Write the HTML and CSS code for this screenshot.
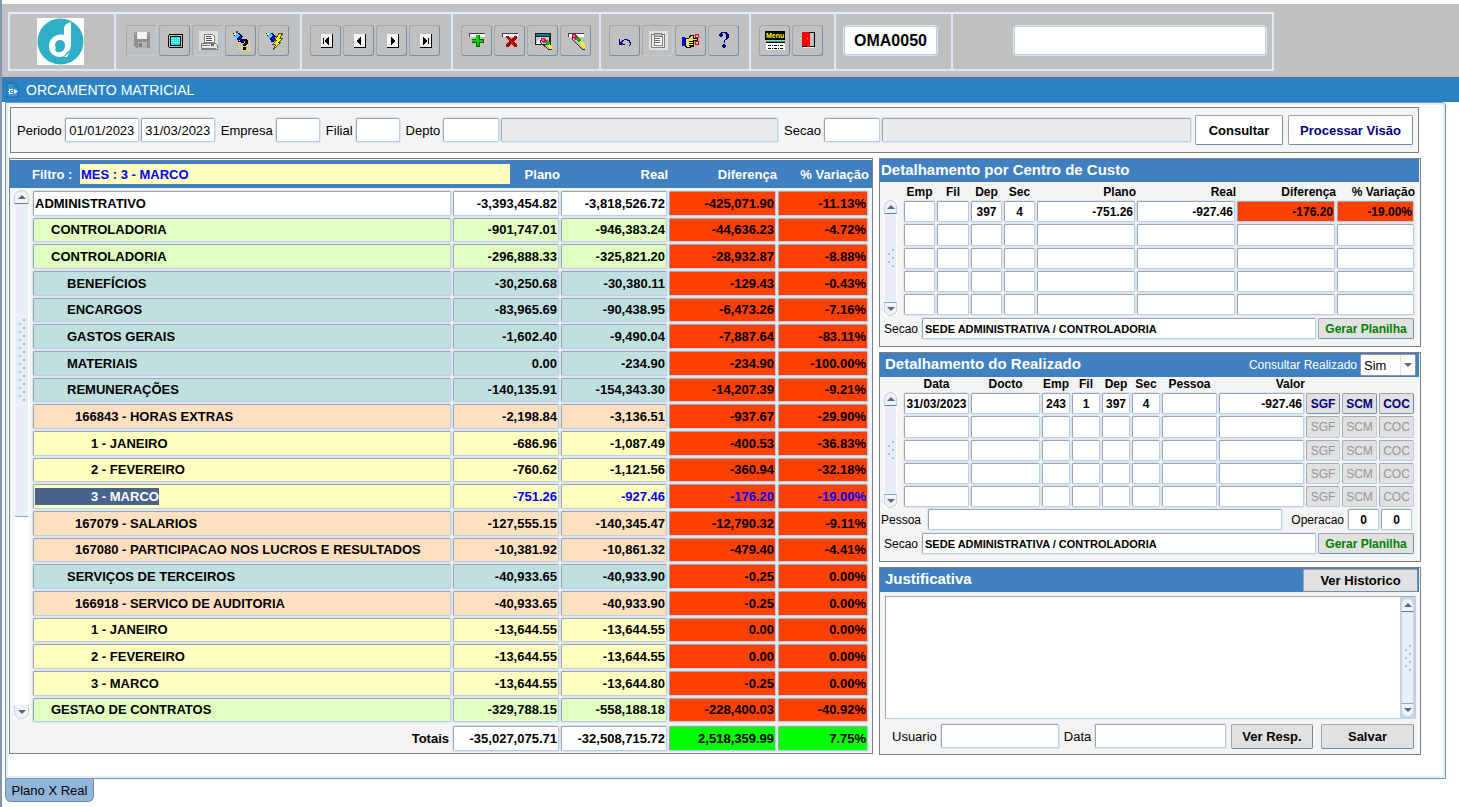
FILE: index.html
```html
<!DOCTYPE html>
<html lang="pt-BR">
<head>
  <meta charset="UTF-8" />
  <meta name="viewport" content="width=device-width, initial-scale=1.0" />
  <title>Orcamento Matricial</title>
  <link rel="stylesheet" href="styles.css">
</head>
<body>
  <div class="shell">
    <div class="toolbar">
      <div class="tool-group logo-group">
        <svg class="logo" viewBox="0 0 47 47">
          <rect width="47" height="47" fill="#fff"/>
          <circle cx="23.5" cy="23.5" r="23" fill="#2fafc6"/>
          <path d="M34 4 C30 5 27 7 27 11 V17 C19 15 12 21 12 28 C12 35 17 39 23 39 C26 39 29 37 30 34 C33 33 34 30 34 26 Z" fill="#fff"/>
          <circle cx="23" cy="27" r="5" fill="#2fafc6"/>
          <path d="M19 30 C17 32 19 35 23 34 C26 34 28 31 28 27 L24 30 Z" fill="#2fafc6"/>
          <path d="M27 39 L33 34 L30 39 Z" fill="#fff"/>
        </svg>
      </div>
      <div class="tool-group">
        <button class="tool" disabled aria-label="Salvar registro">
          <svg viewBox="0 0 20 20"><path d="M2 1h16v16H4l-2-2z" fill="#909090"/><path d="M5 1h10v7H5z" fill="#f4f4f4"/><path d="M6 11h9v6H6z" fill="#b4b4b4"/><path d="M7 12h3v4H7z" fill="#808080"/><path d="M3 2h1v1H3zM16 2h1v1h-1z" fill="#e0e0e0"/></svg>
        </button>
        <button class="tool" aria-label="Tela">
          <svg viewBox="0 0 20 20"><path d="M4 3h13l1 1v12l-1 1H4l-1-1V4z" fill="#000"/><path d="M4 4h13v12H4z" fill="#c0c0c0"/><path d="M5 5h11v10H5z" fill="#000"/><path d="M6 6h9v8H6z" fill="#00e8f0"/><path d="M6 7.5h9M6 9.5h9M6 11.5h9" stroke="#c8ffff" stroke-dasharray="1 1"/></svg>
        </button>
        <button class="tool" disabled aria-label="Imprimir">
          <svg viewBox="0 0 20 20"><path d="M1 0h19v19H1z" fill="#e0e0e0"/><path d="M6 3h8l2 2v6H6z" fill="#fff" stroke="#808080"/><path d="M8 5.5h5M8 7.5h6M8 9.5h6" stroke="#505050"/><path d="M4 12h13l2 2v4H3v-5z" fill="#e8e8e8" stroke="#808080"/><path d="M4 14.5h8M4 17.5h14" stroke="#808080"/><path d="M13 13h3v2h-3z" fill="#606060"/></svg>
        </button>
        <button class="tool" aria-label="Entrar consulta">
          <svg viewBox="0 0 20 20"><path d="M2 2l3 1 3-1 4 3-2 6H8L5 8z" fill="#0000c0"/><path d="M2 2h2l1 3 2 3-2-1z" fill="#000"/><path d="M3 2h3l3 3-4 3z" fill="#50c8f0"/><path d="M3 2h2v2H3z" fill="#fff"/><path d="M5 0h2v2H5z" fill="#e00000"/><path d="M8 2l4 3-2 1M7 10h3v1H7z" fill="#000"/><path d="M8 9.5h12M8 11.5h12M8 13.5h12M8 15.5h12M8 17.5h12M9 19.5h11" stroke="#ffff00" stroke-dasharray="1 1"/><path d="M11 8h5v1h1v4h-1v1h-1v1h-3v-2h1v-1h1V10h-1v2h-3V9h1zM12 16h3v3h-3z" fill="#000"/></svg>
        </button>
        <button class="tool" aria-label="Executar consulta">
          <svg viewBox="0 0 20 20"><path d="M2 2l3 1 3-1 4 3-2 6H8L5 8z" fill="#0000c0"/><path d="M2 2h2l1 3 2 3-2-1z" fill="#000"/><path d="M3 2h3l3 3-4 3z" fill="#50c8f0"/><path d="M3 2h2v2H3z" fill="#fff"/><path d="M8 2l4 3-2 1M7 10h3v1H7z" fill="#000"/><path d="M15 2h4l-3 5h3l-4 4h2l-8 8 3-6H9l4-4h-2z" fill="#ffff00" stroke="#505000"/></svg>
        </button>
      </div>
      <div class="tool-group w-nav">
        <button class="tool" aria-label="Primeiro registro">
          <svg viewBox="0 0 20 20"><path d="M5 3h12v14H5z" fill="#000"/><path d="M5 3h11v13H5z" fill="#f4f4f4"/><path d="M7 7h1v6H7zM13 6v8h-1v-1h-1v-1h-1v-1H9V9h1V8h1V7h1V6z" fill="#000"/></svg>
        </button>
        <button class="tool" aria-label="Registro anterior">
          <svg viewBox="0 0 20 20"><path d="M5 3h12v14H5z" fill="#000"/><path d="M5 3h11v13H5z" fill="#f4f4f4"/><path d="M12 6v8h-1v-1h-1v-1H9v-1H8V9h1V8h1V7h1V6z" fill="#000"/></svg>
        </button>
        <button class="tool" aria-label="Proximo registro">
          <svg viewBox="0 0 20 20"><path d="M5 3h12v14H5z" fill="#000"/><path d="M5 3h11v13H5z" fill="#f4f4f4"/><path d="M9 6v8h1v-1h1v-1h1v-1h1V9h-1V8h-1V7h-1V6z" fill="#000"/></svg>
        </button>
        <button class="tool" aria-label="Ultimo registro">
          <svg viewBox="0 0 20 20"><path d="M5 3h12v14H5z" fill="#000"/><path d="M5 3h11v13H5z" fill="#f4f4f4"/><path d="M8 6v8h1v-1h1v-1h1v-1h1V9h-1V8h-1V7H9V6zM13 7h1v6h-1z" fill="#000"/></svg>
        </button>
      </div>
      <div class="tool-group w-edit">
        <button class="tool" aria-label="Inserir registro">
          <svg viewBox="0 0 20 20"><path d="M2 2h16v4H2z" fill="#404040"/><path d="M3 3h15v3H3z" fill="#fff"/><path d="M9 4h4v4h4v4h-4v4H9v-4H5V8h4z" fill="#006800"/><path d="M9 4h3v5h4v2h-4v4h-2v-4H5V9h4z" fill="#00d000"/></svg>
        </button>
        <button class="tool" aria-label="Excluir registro">
          <svg viewBox="0 0 20 20"><path d="M2 2h16v4H2z" fill="#404040"/><path d="M3 3h15v3H3z" fill="#fff"/><path d="M6 5h3l2 3 3-3h3v2l-3 4 3 3v2h-3l-3-3-2 3H6v-2l3-4-3-3z" fill="#a00000"/><path d="M7 6l8 9" stroke="#d81010"/></svg>
        </button>
        <button class="tool" aria-label="Limpar bloco">
          <svg viewBox="0 0 20 20"><path d="M2 2h16v12H2z" fill="#202020"/><path d="M3 3h14v2H3z" fill="#008080"/><path d="M3 6h13v7H3z" fill="#c8c8c8"/><path d="M3 13l5-7v7z" fill="#fff"/><path d="M8 7h4l2 3-3 2-3-2z" fill="#e00060"/><path d="M9 8h2v2H9z" fill="#ff70c0"/><path d="M12 11l2-2 3 3-2 3-3-3z" fill="#00b000"/><path d="M15 14l2-1 2 3v2h-2z" fill="#ffff00"/><path d="M7 9v2l8 7h4" fill="none" stroke="#303000"/></svg>
        </button>
        <button class="tool" aria-label="Limpar registro">
          <svg viewBox="0 0 20 20"><path d="M2 2h16v4H2z" fill="#404040"/><path d="M3 3h15v3H3z" fill="#fff"/><path d="M6 3h4l2 3-3 3-3-3z" fill="#e00060"/><path d="M7 4h2v2H7z" fill="#ff70c0"/><path d="M10 7l2-1 3 3-2 3-3-3z" fill="#00b000"/><path d="M13 11l2-2 4 5v3h-2z" fill="#ffff00"/><path d="M6 6v2l10 10h3" fill="none" stroke="#303000"/></svg>
        </button>
      </div>
      <div class="tool-group w-help">
        <button class="tool" aria-label="Desfazer">
          <svg viewBox="0 0 20 20"><path d="M4 8v6h6v-1H8v-1H7v-1h1v-1h1V9h3v1h2v2h1v2h-1v1h1v-1h1v-3h-1V9h-2V8H9v1H7v1H6v1H5V8z" fill="#000080"/></svg>
        </button>
        <button class="tool" disabled aria-label="Colar">
          <svg viewBox="0 0 20 20"><path d="M1 0h19v19H1z" fill="#e0e0e0"/><path d="M3 3h13v13H3z" fill="#f0f0f0" stroke="#808080"/><path d="M6 5h8v9H6z" fill="#fff" stroke="#808080"/><path d="M6 2h7v3H6z" fill="#c0c0c0" stroke="#808080"/><path d="M7 7.5h5M7 9.5h5M7 11.5h5" stroke="#707070"/></svg>
        </button>
        <button class="tool" aria-label="Lista de valores">
          <svg viewBox="0 0 20 20"><path d="M1 6h3v9H1z" fill="#0000ff"/><path d="M4 7h4l2-3h2v3h4v2h-4v6H9v1H5v-1H4z" fill="#f0e860" stroke="#000"/><path d="M8 10h5M8 12h4M8 14h4" stroke="#000"/><circle cx="16" cy="5" r="2" fill="none" stroke="#f00000"/><circle cx="16" cy="12" r="2" fill="none" stroke="#f00000"/></svg>
        </button>
        <button class="tool" aria-label="Ajuda">
          <svg viewBox="0 0 20 20"><path d="M7 1h6v1h1v1h1v4h-1v1h-1v1h-2v3h-1V9h1V8h1V3h-1V2H8v1h1v2H8v1H6V5H5V3h1V2h1zM9 13h2v1h1v2h-1v1H9v-1H8v-2h1z" fill="#000080"/></svg>
        </button>
      </div>
      <div class="tool-group w-menu">
        <button class="tool" aria-label="Menu">
          <svg viewBox="0 0 20 20"><path d="M0 0h20v9H0z" fill="#000"/><text x="1" y="7" class="menu-text">Menu</text><path d="M1 10h19v1H1z" fill="#00a0a0"/><path d="M1 11h19v8H1z" fill="#fff"/><path d="M1 11.500h19" stroke="#000"/><path d="M3 14.5h15M3 17.5h15" stroke="#000" stroke-dasharray="3 1 1 1"/></svg>
        </button>
        <button class="tool" aria-label="Sair">
          <svg viewBox="0 0 20 20"><path d="M4 1h13v15H4z" fill="#000"/><path d="M12 2h4v13h-4z" fill="#c0c0c0"/><path d="M4 1h7l1 2v14l-4-2H4z" fill="#ff0000"/><path d="M5 16h11v1H5z" fill="#fff"/><path d="M9 7h1v1H9z" fill="#ffff00"/></svg>
        </button>
      </div>
      <div class="tool-group w-code">
        <input class="program-code" type="text" value="OMA0050" aria-label="Programa">
      </div>
      <div class="tool-group last">
        <input class="message-box" type="text" aria-label="Mensagem">
      </div>
    </div>

    <div class="titlebar">
      <svg class="title-icon" viewBox="0 0 13 16"><path d="M1 1h7l4 4v10H1z" fill="#3a92d2" stroke="#1b6aa5"/><path d="M8 1v4h4" fill="none" stroke="#1b6aa5"/><path d="M3 7h4v1H4v3h3v1H3v-2H2V9h1zM5 9h2v1H5zM8 7l4 2.500-4 2.500z" fill="#fff"/></svg>
      <h1>ORCAMENTO MATRICIAL</h1>
    </div>

    <div class="page">
      <div class="filters">
        <label for="periodoIni">Periodo</label>
        <input class="field date" id="periodoIni" type="text" value="01/01/2023">
        <input class="field date" type="text" value="31/03/2023" aria-label="Periodo final">
        <label class="next" for="empresa">Empresa</label>
        <input class="field code" id="empresa" type="text">
        <label class="next" for="filial">Filial</label>
        <input class="field code" id="filial" type="text">
        <label class="next" for="depto">Depto</label>
        <input class="field long-code" id="depto" type="text">
        <input class="field readonly depto-name" type="text" readonly aria-label="Nome do depto">
        <label class="next" for="secao">Secao</label>
        <input class="field long-code" id="secao" type="text">
        <input class="field readonly secao-name" type="text" readonly aria-label="Nome da secao">
        <button class="btn white">Consultar</button>
        <button class="btn white navy process">Processar Visão</button>
      </div>

      <div class="columns">
        <div class="panel plan">
          <div class="plan-head">
            <label for="filtro">Filtro :</label>
            <input id="filtro" type="text" value="MES : 3 - MARCO">
            <span class="h-plano">Plano</span>
            <span class="h-real">Real</span>
            <span class="h-dif">Diferença</span>
            <span class="h-var">% Variação</span>
          </div>
          <div class="with-scroll">
            <div class="scroller plan-scroll"><i class="up"></i><div class="thumb"><b class="grip tall"></b></div><i class="down"></i></div>
            <table class="plan-table" aria-label="Plano X Real">
              <colgroup><col><col class="c-val"><col class="c-val"><col class="c-dif"><col class="c-var"></colgroup>
              <tbody id="planRows"></tbody>
              <tfoot>
                <tr>
                  <th class="total-label">Totais</th>
                  <td><div class="cell num">-35,027,075.71</div></td>
                  <td><div class="cell num">-32,508,715.72</div></td>
                  <td><div class="cell num green">2,518,359.99</div></td>
                  <td><div class="cell num green">7.75%</div></td>
                </tr>
              </tfoot>
            </table>
          </div>
        </div>

        <div class="side">
          <div class="panel">
            <div class="panel-title tight"><h2>Detalhamento por Centro de Custo</h2></div>
            <div class="with-scroll detail">
              <div class="scroller cost"><i class="up"></i><div class="thumb"><b class="grip"></b></div><i class="down"></i></div>
              <table class="detail-table cost">
                <colgroup><col class="w33"><col class="w34"><col class="w33"><col class="w33"><col><col class="w100"><col class="w100"><col class="w79"></colgroup>
                <thead><tr><th>Emp</th><th>Fil</th><th>Dep</th><th>Sec</th><th class="num">Plano</th><th class="num">Real</th><th class="num">Diferença</th><th class="num">% Variação</th></tr></thead>
                <tbody id="costRows"></tbody>
              </table>
            </div>
            <div class="line">
              <label for="secaoCusto">Secao</label>
              <input class="field grow strong" id="secaoCusto" type="text" value="SEDE ADMINISTRATIVA / CONTROLADORIA">
              <button class="btn sheet">Gerar Planilha</button>
            </div>
          </div>

          <div class="panel">
            <div class="panel-title">
              <h2>Detalhamento do Realizado</h2>
              <label for="consReal">Consultar Realizado</label>
              <span class="select-box"><select id="consReal"><option>Sim</option><option>Não</option></select></span>
            </div>
            <div class="with-scroll detail">
              <div class="scroller real"><i class="up"></i><div class="thumb"><b class="grip"></b></div><i class="down"></i></div>
              <table class="detail-table real">
                <colgroup><col class="w67"><col><col class="w30"><col class="w30"><col class="w30"><col class="w30"><col class="w57"><col class="w87"><col class="w36"><col class="w37"><col class="w37"></colgroup>
                <thead><tr><th>Data</th><th>Docto</th><th>Emp</th><th>Fil</th><th>Dep</th><th>Sec</th><th>Pessoa</th><th class="num">Valor</th><td colspan="3"></td></tr></thead>
                <tbody id="realRows"></tbody>
              </table>
            </div>
            <div class="line person">
              <label for="pessoa">Pessoa</label>
              <input class="field grow" id="pessoa" type="text">
              <label class="oper" for="oper">Operacao</label>
              <input class="field tiny" id="oper" type="text" value="0">
              <input class="field tiny" type="text" value="0" aria-label="Operacao 2">
            </div>
            <div class="line">
              <label for="secaoReal">Secao</label>
              <input class="field grow strong" id="secaoReal" type="text" value="SEDE ADMINISTRATIVA / CONTROLADORIA">
              <button class="btn sheet">Gerar Planilha</button>
            </div>
          </div>

          <div class="panel">
            <div class="panel-title">
              <h2><label for="justificativa">Justificativa</label></h2>
              <button class="btn history">Ver Historico</button>
            </div>
            <div class="note">
              <textarea id="justificativa"></textarea>
              <div class="scroller boxed"><i class="up"></i><div class="thumb"><b class="grip mid"></b></div><i class="down"></i></div>
            </div>
            <div class="line foot">
              <label for="usuario">Usuario</label>
              <input class="field user" id="usuario" type="text">
              <label for="dataJust">Data</label>
              <input class="field grow" id="dataJust" type="text">
              <button class="btn resp">Ver Resp.</button>
              <button class="btn save">Salvar</button>
            </div>
          </div>
        </div>
      </div>
    </div>
    <button class="tab">Plano X Real</button>
  </div>
  <script src="script.js"></script>
</body>
</html>
```

FILE: styles.css
```css
* { box-sizing: border-box; }
body { margin: 0; background: #fff; color: #000; font-family: "Liberation Sans", Arial, sans-serif; font-size: 13px; }
input, button, select, textarea { font-family: inherit; font-size: inherit; color: inherit; margin: 0; border-radius: 0; }
h1, h2 { margin: 0; }
.shell { border-left: 2px solid #8196b4; padding-top: 4px; min-height: 100vh; }

/* toolbar */
.toolbar { background: #c0c0c0; padding: 8px 0 6px 6px; display: flex; height: 73px; }
.tool-group { display: flex; align-items: center; gap: 2px; padding: 0 0 2px 8px; height: 59px; width: 186px; border: 2px solid #dce8f6; border-right: 0; border-top-color: #e4eefa; flex: none; }
.tool-group:nth-child(2) { padding-left: 10px; }
.tool-group.w-nav { width: 151px; }
.tool-group.w-edit { width: 148px; }
.tool-group.w-help { width: 150px; }
.tool-group.w-menu { width: 85px; }
.tool-group.w-code { width: 117px; }
.tool-group.logo-group { width: 106px; padding: 0 0 0 27px; }
.tool-group.last { width: 323px; padding-left: 61px; border-right: 2px solid #dce8f6; }
.logo { width: 47px; height: 47px; }
.tool { width: 31px; height: 31px; padding: 0; background: #c0c0c0; border: 1px solid; border-color: #a4a4a4 #6f8fb0 #6f8fb0 #a4a4a4; border-radius: 3px; display: flex; align-items: center; justify-content: center; flex: none; }
.tool:disabled { border-color: #a8a8a8 #b8cce4 #b8cce4 #a8a8a8; }
.tool svg { width: 20px; height: 20px; shape-rendering: crispEdges; }
.menu-text { font-size: 7px; font-weight: 700; fill: #ffff00; }
.program-code, .message-box { background: #fff; border: 1px solid #b8cce4; border-radius: 3px; height: 29px; padding: 0; outline: 1px solid #dce8f6; }
.program-code { width: 93px; font-size: 16px; font-weight: 700; text-align: center; }
.message-box { width: 252px; }

/* window title */
.titlebar { background: #2b83c3; height: 25px; border-top: 1px solid #5a6c88; display: flex; align-items: center; padding-left: 4px; color: #fff; }
.titlebar h1 { font-size: 14px; font-weight: 400; line-height: 24px; padding-left: 7px; }
.title-icon { width: 13px; height: 16px; }

.page { margin: 0 13px 0 3px; border: 1px solid #7096bd; border-radius: 0 4px 0 0; box-shadow: inset 0 0 0 2px #e8eef7; padding: 4px 24px 23px 3px; }

/* fields and buttons */
.field { height: 24px; margin: 1px; padding: 0 2px; background: #fff; border: 1px solid; border-color: #a0a4ac #bccfe6 #bccfe6 #a0a4ac; border-radius: 2px; box-shadow: 0 0 0 1px #dbe6f4; outline: 0; min-width: 0; }
.field.readonly { background: #ebebeb; }
.btn { background: #e1e1e1; color: #000; border: 1px solid; border-color: #a4a4a4 #6f8fb0 #6f8fb0 #a4a4a4; border-radius: 2px; font-weight: 700; padding: 0; white-space: nowrap; flex: none; }
.btn.white { background: #fff; }
.btn.navy { color: #000080; }

.filters { display: flex; align-items: center; height: 46px; border: 1px solid #808080; background: #f4f4f4; margin: 0 2px 5px 1px; padding: 0 5px 0 6px; }
.filters label { white-space: nowrap; padding-right: 2px; }
.filters label.next { padding-left: 5px; }
.filters .date { width: 74px; text-align: center; padding: 0; }
.filters .code { width: 44px; }
.filters .long-code { width: 56px; }
.filters .depto-name { flex: 277 1 0; }
.filters .secao-name { flex: 310 1 0; }
.filters .btn { height: 30px; width: 88px; margin-left: 3px; }
.filters .btn.process { width: 125px; margin-left: 5px; }

.columns { display: grid; grid-template-columns: minmax(0, 1fr) 542px; gap: 6px; align-items: start; }
.panel { border: 1px solid #808080; background: #f4f4f4; }
.side { display: grid; grid-template-columns: minmax(0, 1fr); gap: 5px; }

/* plan grid */
.plan { padding: 1px 0; }
.plan-head { display: flex; align-items: center; height: 28px; margin-bottom: 2px; background: #4080c0; color: #fff; font-weight: 700; padding: 0 3px 0 22px; }
.plan-head label { width: 48px; white-space: nowrap; }
.plan-head input { flex: 1; min-width: 0; height: 20px; border: 0; padding: 0 1px; background: #ffffc0; color: #0000ff; font-weight: 700; }
.plan-head span { text-align: right; }
.h-plano { width: 50px; }
.h-real { width: 108px; }
.h-dif { width: 109px; }
.h-var { width: 92px; }
.with-scroll { display: flex; padding: 0 3px 0 4px; }
table { border-collapse: collapse; table-layout: fixed; flex: 1; width: 100%; min-width: 0; }
td, th { padding: 0; }
.plan-table { margin-left: 3px; }
.c-val { width: 108px; }
.c-dif { width: 109px; }
.c-var { width: 92px; }
.cell { height: 25px; line-height: 23px; margin: 1px; padding: 0 1px; overflow: hidden; white-space: nowrap; font-weight: 700; background: #fff; border: 1px solid; border-color: #a0a4ac #bccfe6 #bccfe6 #a0a4ac; border-radius: 2px; box-shadow: 0 0 0 1px #dbe6f4; }
tbody tr:nth-child(3n+2) .cell { height: 24px; line-height: 22px; }
.num { text-align: right; }
.cell.green { background: #00ff00; }
.lime .cell { background: #e0ffc0; }
.teal .cell { background: #c0e0e0; }
.peach .cell { background: #ffe0c0; }
.yellow .cell { background: #ffffc0; }
.plan-table tbody .cell.red { background: #ff4000; }
.level1 .name { padding-left: 17px; }
.level2 .name { padding-left: 33px; }
.level3 .name { padding-left: 41px; }
.level4 .name { padding-left: 57px; }
.current .name { padding-left: 1px; }
.current .name span { display: inline-block; line-height: 17px; padding-left: 56px; background: #48648c; color: #fff; }
.current .num { color: #0000ff; }
tfoot td, tfoot th { padding-top: 2px; }
.total-label { text-align: right; padding-right: 3px; }

/* drawn scroll bars */
.scroller { width: 13px; flex: none; display: flex; flex-direction: column; background: #fff; }
.scroller i { height: 14px; flex: none; background: #eef2f9; border: 1px solid #c4d3e8; display: flex; align-items: center; justify-content: center; }
.scroller .up { border-radius: 7px 7px 0 0; border-bottom-color: #6a7890; }
.scroller .down { border-radius: 0 0 7px 7px; border-top-color: #8fa8c4; }
.scroller i::after { content: ""; border: 4px solid transparent; }
.scroller .up::after { border-bottom-color: #606478; border-top: 0; }
.scroller .down::after { border-top-color: #606478; border-bottom: 0; }
.thumb { flex: 1; margin: 0 1px; background: #e8edf6; display: flex; align-items: center; justify-content: center; }
.grip { width: 8px; height: 20px; background: radial-gradient(circle at 2px 6px, #a9bfd8 1px, transparent 1px) 0 0 / 8px 8px, radial-gradient(circle at 6px 2px, #a9bfd8 1px, transparent 1px) 0 0 / 8px 8px; }
.grip.mid { height: 28px; }
.grip.tall { height: 84px; }
.plan-scroll { width: 15px; margin-bottom: 33px; }
.plan-scroll .thumb { flex: none; height: 313px; border-bottom: 1px solid #8fa8c4; }
.plan-scroll .down { margin-top: auto; border-top-color: #eef2f9; }

/* detail panels */
.panel-title { display: flex; align-items: center; height: 24px; background: #4080c0; color: #fff; margin-right: 1px; padding-left: 5px; }
.panel-title.tight { padding-left: 1px; height: 23px; }
.panel-title h2 { font-size: 15px; line-height: 20px; padding-bottom: 2px; flex: 1; }
.panel-title label { white-space: nowrap; }
.panel-title > label { font-size: 12px; padding-right: 3px; }
.select-box { display: flex; align-items: center; width: 56px; height: 22px; margin-right: 3px; border: 1px solid #8e96a0; border-radius: 2px; background: #fff; color: #000; }
.select-box::after { content: ""; border: 4px solid transparent; border-top-color: #606478; border-bottom: 0; padding: 0; margin: 0 3px; flex: none; }
.select-box select { appearance: none; border: 0; background: transparent; padding: 0 0 0 3px; flex: 1; min-width: 0; height: 20px; border-right: 1px solid #dde4ee; }
.with-scroll.detail { padding: 0 5px 0 4px; font-size: 12px; }
.scroller.cost { margin-top: 18px; }
.scroller.real { margin-top: 15px; }
.detail-table { margin-left: 6px; }
.detail-table thead { height: 18px; }
.detail-table.real thead { height: 15px; }
.detail-table th { line-height: 15px; vertical-align: bottom; white-space: nowrap; }
.detail-table .field { display: block; width: calc(100% - 2px); height: 21px; font-weight: 700; text-align: center; padding: 0; }
.detail-table tr:nth-child(2) .field { height: 22px; }
.detail-table .field.num { text-align: right; padding-right: 1px; }
.detail-table .field.red { background: #ff4000; }
.detail-table .btn { display: block; width: calc(100% - 2px); height: 21px; margin: 1px; color: #000080; }
.detail-table tr:nth-child(2) .btn { height: 22px; }
.detail-table .btn:disabled { color: #969696; font-weight: 400; border-color: #a8a8a8 #b8cce4 #b8cce4 #a8a8a8; }
.w30 { width: 30px; }
.w33 { width: 33px; }
.w34 { width: 34px; }
.w36 { width: 36px; }
.w37 { width: 37px; }
.w57 { width: 57px; }
.w67 { width: 67px; }
.w79 { width: 79px; }
.w87 { width: 87px; }
.w100 { width: 100px; }
.line { display: flex; align-items: center; font-size: 12px; padding: 1px 6px 6px 4px; }
.line label { padding-right: 3px; white-space: nowrap; }
.line .field { height: 21px; }
.line .field.strong { font-size: 11px; font-weight: 700; }
.line .grow { flex: 1; }
.line .sheet { width: 96px; height: 21px; margin-left: 1px; color: #008000; }
.line.person { padding: 0 7px 0 1px; }
.line.person label { padding-right: 6px; }
.line.person .oper { padding: 0 3px 0 8px; }
.line .tiny { width: 31px; text-align: center; font-weight: 700; padding: 0; }
.btn.history { width: 115px; height: 23px; margin-right: 1px; }
.note { display: flex; height: 123px; margin: 4px 4px 4px 5px; border: 1px solid; border-color: #a0a4ac #bccfe6 #bccfe6 #a0a4ac; background: #fff; }
.note textarea { flex: 1; border: 0; resize: none; outline: 0; background: #fff; }
.scroller.boxed { width: 15px; background: #c4d3e8; border: 1px solid #c4d3e8; }
.line.foot { font-size: 13px; padding: 0 6px 5px 12px; }
.line.foot .field { height: 24px; }
.line.foot .user { width: 118px; margin-right: 5px; }
.line.foot .btn { height: 25px; }
.line.foot .resp { width: 82px; margin: 0 8px 0 4px; }
.line.foot .save { width: 93px; }

.tab { display: block; margin-left: 3px; width: 89px; height: 23px; padding: 0; background: #92b6d9; border: 1px solid #6a8fb8; border-top: 0; border-radius: 0 0 6px 6px; }
```

FILE: script.js
```js
// colour, level, description, plano, real, diferenca, variacao
const plan = [
  ['', 0, 'ADMINISTRATIVO', '-3,393,454.82', '-3,818,526.72', '-425,071.90', '-11.13%'],
  ['lime', 1, 'CONTROLADORIA', '-901,747.01', '-946,383.24', '-44,636.23', '-4.72%'],
  ['lime', 1, 'CONTROLADORIA', '-296,888.33', '-325,821.20', '-28,932.87', '-8.88%'],
  ['teal', 2, 'BENEFÍCIOS', '-30,250.68', '-30,380.11', '-129.43', '-0.43%'],
  ['teal', 2, 'ENCARGOS', '-83,965.69', '-90,438.95', '-6,473.26', '-7.16%'],
  ['teal', 2, 'GASTOS GERAIS', '-1,602.40', '-9,490.04', '-7,887.64', '-83.11%'],
  ['teal', 2, 'MATERIAIS', '0.00', '-234.90', '-234.90', '-100.00%'],
  ['teal', 2, 'REMUNERAÇÕES', '-140,135.91', '-154,343.30', '-14,207.39', '-9.21%'],
  ['peach', 3, '166843 - HORAS EXTRAS', '-2,198.84', '-3,136.51', '-937.67', '-29.90%'],
  ['yellow', 4, '1 - JANEIRO', '-686.96', '-1,087.49', '-400.53', '-36.83%'],
  ['yellow', 4, '2 - FEVEREIRO', '-760.62', '-1,121.56', '-360.94', '-32.18%'],
  ['yellow current', 4, '3 - MARCO', '-751.26', '-927.46', '-176.20', '-19.00%'],
  ['peach', 3, '167079 - SALARIOS', '-127,555.15', '-140,345.47', '-12,790.32', '-9.11%'],
  ['peach', 3, '167080 - PARTICIPACAO NOS LUCROS E RESULTADOS', '-10,381.92', '-10,861.32', '-479.40', '-4.41%'],
  ['teal', 2, 'SERVIÇOS DE TERCEIROS', '-40,933.65', '-40,933.90', '-0.25', '0.00%'],
  ['peach', 3, '166918 - SERVICO DE AUDITORIA', '-40,933.65', '-40,933.90', '-0.25', '0.00%'],
  ['yellow', 4, '1 - JANEIRO', '-13,644.55', '-13,644.55', '0.00', '0.00%'],
  ['yellow', 4, '2 - FEVEREIRO', '-13,644.55', '-13,644.55', '0.00', '0.00%'],
  ['yellow', 4, '3 - MARCO', '-13,644.55', '-13,644.80', '-0.25', '0.00%'],
  ['lime', 1, 'GESTAO DE CONTRATOS', '-329,788.15', '-558,188.18', '-228,400.03', '-40.92%']
];

document.getElementById('planRows').innerHTML = plan.map(r => `
  <tr class="${r[0]} level${r[1]}">
    <td><div class="cell name"><span>${r[2]}</span></div></td>
    <td><div class="cell num">${r[3]}</div></td>
    <td><div class="cell num">${r[4]}</div></td>
    <td><div class="cell num red">${r[5]}</div></td>
    <td><div class="cell num red">${r[6]}</div></td>
  </tr>`).join('');

function field(value, cls, label) {
  return `<td><input class="field ${cls}" type="text" value="${value}" aria-label="${label}"></td>`;
}

// first line has data, the other four stay blank
function fillRows(id, names, first, classes, buttons) {
  let html = '';
  for (let i = 0; i < 5; i++) {
    html += '<tr>';
    names.forEach((name, c) => {
      const cls = i === 0 ? classes[c] : classes[c].replace('red', '');
      html += field(i === 0 ? first[c] : '', cls, name);
    });
    buttons.forEach(b => {
      html += `<td><button class="btn" ${i > 0 ? 'disabled' : ''}>${b}</button></td>`;
    });
    html += '</tr>';
  }
  document.getElementById(id).innerHTML = html;
}

fillRows('costRows',
  ['Emp', 'Fil', 'Dep', 'Sec', 'Plano', 'Real', 'Diferença', '% Variação'],
  ['', '', '397', '4', '-751.26', '-927.46', '-176.20', '-19.00%'],
  ['', '', '', '', 'num', 'num', 'num red', 'num red'], []);

fillRows('realRows',
  ['Data', 'Docto', 'Emp', 'Fil', 'Dep', 'Sec', 'Pessoa', 'Valor'],
  ['31/03/2023', '', '243', '1', '397', '4', '', '-927.46'],
  ['', '', '', '', '', '', '', 'num'], ['SGF', 'SCM', 'COC']);
```
